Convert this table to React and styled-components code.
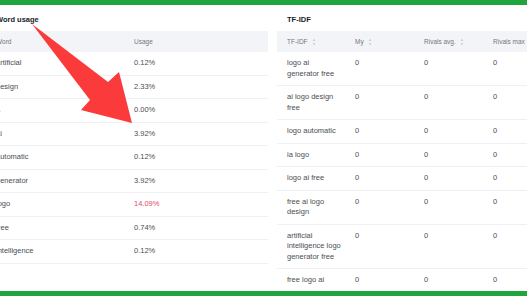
import styled, { createGlobalStyle } from "styled-components";

const GlobalStyle = createGlobalStyle`
  html, body {
    margin: 0;
    padding: 0;
    background: #fff;
  }
  body {
    font-family: "Liberation Sans", Arial, sans-serif;
  }
`;

const Frame = styled.div`
  position: relative;
  width: 527px;
  height: 296px;
  box-sizing: border-box;
  border-top: 5px solid #1ea53c;
  border-bottom: 5px solid #1ea53c;
  overflow: hidden;
  background: #fff;
`;

const Panels = styled.div`
  display: flex;
  gap: 9px;
  margin-left: -14px;
`;

const Panel = styled.section`
  flex: 0 0 282px;
`;

const Title = styled.h3`
  margin: 0;
  padding: 8.5px 10px 6.5px;
  font-size: 7.5px;
  line-height: 11px;
  font-weight: 700;
  color: #1b1c1f;
`;

const Table = styled.div`
  display: grid;
  grid-template-columns: ${(p) => p.$cols};
`;

const HeadCell = styled.div`
  display: flex;
  align-items: center;
  gap: 4px;
  height: 21px;
  padding: 0 10px;
  background: #f3f4f7;
  font-size: 6.5px;
  color: #74777d;
  white-space: nowrap;
`;

const Cell = styled.div`
  padding: 6px 3px 6px 10px;
  border-bottom: 1px solid #eef0f3;
  font-size: 7.5px;
  line-height: 10.5px;
  color: ${(p) => (p.$hot ? "#e5486a" : "#4c4e52")};
`;

const Arrow = styled.svg`
  position: absolute;
  left: 0;
  top: -5px;
  pointer-events: none;
`;

function SortMark() {
  return (
    <svg width="4" height="8" viewBox="0 0 4 8">
      <path d="M2 0.5 L3.6 3 L0.4 3 Z M2 7.5 L3.6 5 L0.4 5 Z" fill="#d0d3d9" />
    </svg>
  );
}

const words = [
  ["artificial", "0.12%"],
  ["design", "2.33%"],
  ["a", "0.00%"],
  ["ai", "3.92%"],
  ["automatic", "0.12%"],
  ["generator", "3.92%"],
  ["logo", "14.09%", true],
  ["free", "0.74%"],
  ["intelligence", "0.12%"],
];

const terms = [
  "logo ai generator free",
  "ai logo design free",
  "logo automatic",
  "ia logo",
  "logo ai free",
  "free ai logo design",
  "artificial intelligence logo generator free",
  "free logo ai",
];

export default function App() {
  return (
    <>
      <GlobalStyle />
      <Frame>
        <Panels>
          <Panel>
            <Title>Word usage</Title>
            <Table $cols="138px 1fr">
              <HeadCell>Word</HeadCell>
              <HeadCell>Usage</HeadCell>
              {words.map(([w, u, hot]) => (
                <>
                  <Cell key={w}>{w}</Cell>
                  <Cell key={w + "-u"} $hot={hot}>{u}</Cell>
                </>
              ))}
            </Table>
          </Panel>
          <Panel>
            <Title>TF-IDF</Title>
            <Table $cols="68px 69px 69px 1fr">
              <HeadCell>TF-IDF <SortMark /></HeadCell>
              <HeadCell>My <SortMark /></HeadCell>
              <HeadCell>Rivals avg. <SortMark /></HeadCell>
              <HeadCell>Rivals max</HeadCell>
              {terms.map((t) => (
                <>
                  <Cell key={t}>{t}</Cell>
                  <Cell key={t + "-m"}>0</Cell>
                  <Cell key={t + "-a"}>0</Cell>
                  <Cell key={t + "-x"}>0</Cell>
                </>
              ))}
            </Table>
          </Panel>
        </Panels>
        <Arrow width="527" height="297" viewBox="0 0 527 297">
          <polygon
            points="32,24 108,82 119,72 132,123 81,110 90,100"
            fill="#fb3b3b"
          />
        </Arrow>
      </Frame>
    </>
  );
}
